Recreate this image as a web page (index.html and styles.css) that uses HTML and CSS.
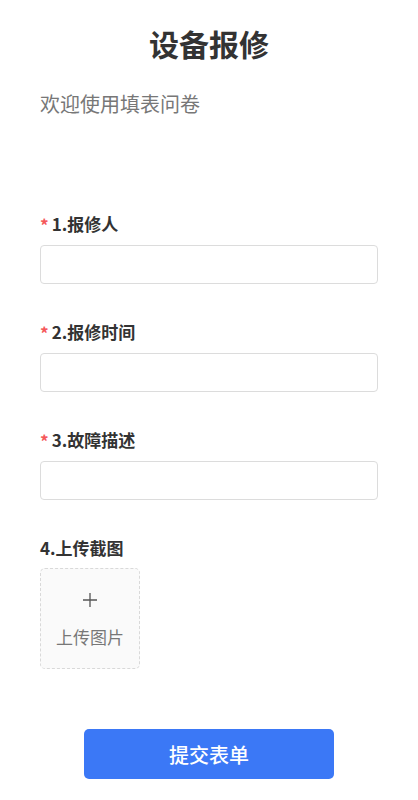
FILE: index.html
```html
<!DOCTYPE html>
<html>
<head>
  <meta charset="utf-8">
  <title>设备报修</title>
  <link rel="stylesheet" href="styles.css">
</head>
<body>
  <div class="pagina">
    <h1 class="titulo">设备报修</h1>
    <p class="descricao">欢迎使用填表问卷</p>

    <form class="formulario">
      <div class="campo">
        <label class="rotulo"><span class="obrigatorio">*</span>1.报修人</label>
        <input class="entrada" type="text">
      </div>

      <div class="campo">
        <label class="rotulo"><span class="obrigatorio">*</span>2.报修时间</label>
        <input class="entrada" type="text">
      </div>

      <div class="campo">
        <label class="rotulo"><span class="obrigatorio">*</span>3.故障描述</label>
        <input class="entrada" type="text">
      </div>

      <div class="campo">
        <label class="rotulo">4.上传截图</label>
        <div class="upload">
          <svg class="upload-mais" width="16" height="16" viewBox="0 0 16 16">
            <path d="M8 1v14M1 8h14" stroke="#555" stroke-width="1.3" fill="none"/>
          </svg>
          <span class="upload-texto">上传图片</span>
        </div>
      </div>

      <div class="acoes">
        <button class="enviar" type="button">提交表单</button>
      </div>
    </form>
  </div>
</body>
</html>
```

FILE: styles.css
```css
body {
  font-family: "Noto Sans CJK SC", "Noto Sans", sans-serif;
  margin: 0;
  background: #fff;
  color: #333;
}

.pagina {
  padding: 23px 40px 20px;
}

.titulo {
  margin: 0;
  font-size: 30px;
  line-height: 40px;
  font-weight: bold;
  text-align: center;
  color: #333;
}

.descricao {
  margin: 27px 0 0;
  font-size: 20px;
  line-height: 28px;
  color: #777;
}

.formulario {
  margin-top: 93px;
}

.campo {
  margin-bottom: 35px;
}

.rotulo {
  display: flex;
  align-items: center;
  height: 24px;
  font-size: 17px;
  font-weight: bold;
  color: #333;
  margin-bottom: 10px;
}

.obrigatorio {
  color: #f5585a;
  font-size: 17px;
  font-weight: bold;
  margin-right: 3px;
  position: relative;
  top: 1px;
}

.entrada {
  display: block;
  box-sizing: border-box;
  width: 100%;
  height: 39px;
  border: 1px solid #dcdcdc;
  border-radius: 4px;
  padding: 0 10px;
  font-size: 15px;
  outline: none;
}

.upload {
  box-sizing: border-box;
  width: 100px;
  height: 101px;
  margin-top: -1px;
  border: 1px dashed #d9d9d9;
  border-radius: 5px;
  background: #fafafa;
  display: flex;
  flex-direction: column;
  align-items: center;
  padding-top: 23px;
}

.upload-texto {
  margin-top: 17px;
  font-size: 17px;
  line-height: 24px;
  color: #777;
}

.acoes {
  display: flex;
  justify-content: center;
  margin-top: 60px;
}

.enviar {
  width: 250px;
  height: 50px;
  border: none;
  border-radius: 5px;
  background: #3b78f6;
  color: #fff;
  font-family: inherit;
  font-size: 20px;
  font-weight: 500;
}
```
